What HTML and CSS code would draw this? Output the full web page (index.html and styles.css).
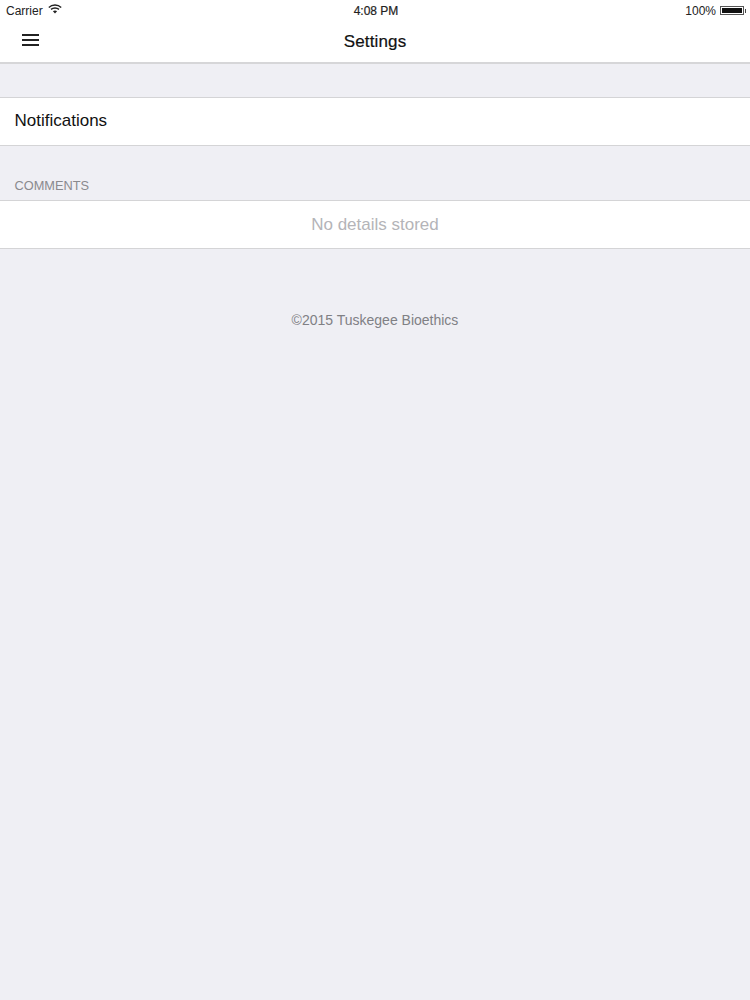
FILE: index.html
```html
<!DOCTYPE html>
<html lang="en">
<head>
    <meta charset="UTF-8">
    <title>Settings</title>
    <link rel="stylesheet" href="styles.css">
</head>
<body>
    <header class="topbar">
        <div class="status-bar">
            <div class="status-left">
                <span>Carrier</span>
                <svg class="wifi" width="14" height="10" viewBox="0 0 14 10">
                    <path d="M0.8 3.4C4.2 0.2 9.8 0.2 13.2 3.4" fill="none" stroke="#222" stroke-width="1.4"/>
                    <path d="M3 5.4C5.2 3.5 8.8 3.5 11 5.4" fill="none" stroke="#222" stroke-width="1.4"/>
                    <path d="M7 9.6L4.9 7.3C6.1 6.3 7.9 6.3 9.1 7.3Z" fill="#222"/>
                </svg>
            </div>
            <div class="status-time">4:08 PM</div>
            <div class="status-right">
                <span>100%</span>
                <div class="battery">
                    <div class="battery-level"></div>
                </div>
                <div class="battery-tip"></div>
            </div>
        </div>
        <div class="navbar">
            <button class="menu-button" aria-label="Menu">
                <span></span>
                <span></span>
                <span></span>
            </button>
            <h1 class="nav-title">Settings</h1>
        </div>
    </header>

    <main>
        <div class="row row-first">Notifications</div>
        <div class="section-label">COMMENTS</div>
        <div class="row row-empty">No details stored</div>
        <p class="copyright">©2015 Tuskegee Bioethics</p>
    </main>
</body>
</html>
```

FILE: styles.css
```css
html, body {
    height: 100%;
}
body {
    font-family: "Liberation Sans", Arial, sans-serif;
    background-color: #efeff4;
    margin: 0;
    color: #111;
}
.topbar {
    background-color: #fff;
    border-bottom: 2px solid #d6d6d8;
    height: 62px;
}
.status-bar {
    display: grid;
    grid-template-columns: 1fr auto 1fr;
    align-items: center;
    height: 21px;
    padding: 0 4px 0 6px;
    font-size: 12px;
    color: #222;
}
.status-left {
    display: flex;
    align-items: center;
    gap: 5px;
}
.wifi {
    margin-top: -3px;
}
.status-time {
    -webkit-text-stroke: 0.2px #222;
}
.status-right {
    display: flex;
    align-items: center;
    justify-content: flex-end;
}
.battery {
    width: 20px;
    height: 5px;
    margin-left: 4px;
    padding: 1px;
    border: 1px solid #555;
}
.battery-level {
    height: 100%;
    background-color: #111;
}
.battery-tip {
    width: 1px;
    height: 4px;
    margin-left: 1px;
    background-color: #444;
}
.navbar {
    position: relative;
    display: flex;
    align-items: center;
    justify-content: center;
    height: 41px;
}
.menu-button {
    position: absolute;
    left: 22px;
    top: 13px;
    display: flex;
    flex-direction: column;
    gap: 3px;
    width: 17px;
    padding: 0;
    border: none;
    background: none;
}
.menu-button span {
    display: block;
    height: 2px;
    background-color: #222;
}
.nav-title {
    margin: 0;
    font-size: 17px;
    font-weight: 400;
    letter-spacing: 0.15px;
    -webkit-text-stroke: 0.2px #111;
}
.row {
    background-color: #fff;
    border-top: 1px solid #d4d4d6;
    border-bottom: 1px solid #d4d4d6;
    height: 47px;
    font-size: 17px;
}
.row-first {
    margin-top: 33px;
    padding-left: 14.5px;
    line-height: 46px;
}
.row-empty {
    text-align: center;
    line-height: 47px;
    color: #b4b4b8;
}
.section-label {
    margin-top: 33px;
    padding-left: 14.5px;
    height: 21px;
    line-height: 14px;
    font-size: 12.8px;
    color: #8a8a8e;
}
.copyright {
    margin: 62px 0 0;
    text-align: center;
    font-size: 14px;
    line-height: 18px;
    color: #808084;
}
```
